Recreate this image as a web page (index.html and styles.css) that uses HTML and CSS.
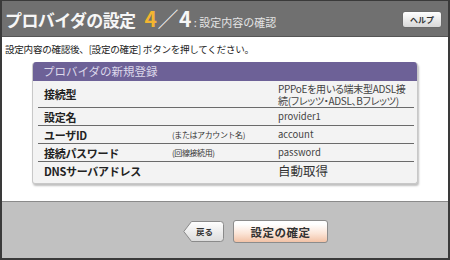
FILE: index.html
```html
<!DOCTYPE html>
<html lang="ja">
<head>
<meta charset="utf-8">
<link rel="stylesheet" href="styles.css">
</head>
<body>
<div class="frame">
  <header class="top">
    <h1 class="title">
      <span class="t-main">プロバイダの設定</span>
      <span class="step"><span class="cur">4</span><span class="sl">／</span>4</span>
      <span class="sub">: 設定内容の確認</span>
    </h1>
    <button class="help">ヘルプ</button>
  </header>
  <main class="content">
    <p class="lead">設定内容の確認後、[設定の確定] ボタンを押してください。</p>
    <section class="card">
      <div class="card-h">プロバイダの新規登録</div>
      <div class="rows">
        <div class="row tall">
          <div class="lbl">接続型</div><div class="note"></div>
          <div class="val wrap">PPPoEを用いる端末型ADSL接続(フレッツ・ADSL、Bフレッツ)</div>
        </div>
        <div class="row">
          <div class="lbl">設定名</div><div class="note"></div>
          <div class="val">provider1</div>
        </div>
        <div class="row">
          <div class="lbl">ユーザID</div><div class="note">(またはアカウント名)</div>
          <div class="val">account</div>
        </div>
        <div class="row">
          <div class="lbl">接続パスワード</div><div class="note">(回線接続用)</div>
          <div class="val">password</div>
        </div>
        <div class="row last">
          <div class="lbl">DNSサーバアドレス</div><div class="note"></div>
          <div class="val big">自動取得</div>
        </div>
      </div>
    </section>
  </main>
  <footer class="foot">
    <button class="back">
      <svg class="back-shape" width="41" height="21" viewBox="0 0 41 21">
        <defs>
          <linearGradient id="bg" x1="0" y1="0" x2="0" y2="1">
            <stop offset="0" stop-color="#ffffff"/>
            <stop offset="1" stop-color="#dcdcdc"/>
          </linearGradient>
        </defs>
        <path d="M8.5,0.5 H37.5 Q40.5,0.5 40.5,3.5 V17.5 Q40.5,20.5 37.5,20.5 H8.5 L0.8,10.5 Z" fill="url(#bg)" stroke="#8a8a8a" stroke-width="1"/>
      </svg>
      <span class="back-t">戻る</span>
    </button>
    <button class="confirm">設定の確定</button>
  </footer>
</div>
</body>
</html>
```
FILE: styles.css
```css
* { box-sizing: border-box; }
html, body { margin: 0; padding: 0; background: #fff; }
body { font-family: "Noto Sans CJK JP", "Noto Sans", sans-serif; color: #222; }
.frame {
  width: 450px; height: 260px;
  border-left: 2px solid #3a3a3a; border-right: 2px solid #3a3a3a;
  border-top: 1px solid #3a3a3a; border-bottom: 2px solid #3a3a3a;
  display: flex; flex-direction: column;
  background: #fff;
}
.top {
  height: 36px; flex: none;
  background: #707070;
  border-bottom: 1px solid #555;
  display: flex; align-items: center; justify-content: space-between;
  padding: 0 6px 0 3px;
}
.title { margin: 0; display: flex; align-items: baseline; font-weight: bold; color: #f6f6f6; line-height: 1; }
.t-main { font-size: 17px; letter-spacing: -0.6px; }
.step { font-size: 21px; margin-left: 9px; font-weight: bold; letter-spacing: -0.5px; }
.cur { color: #f3b530; }
.sl { font-weight: normal; margin: 0 1px; }
.sub { font-size: 11px; font-weight: normal; color: #e4e4e4; margin-left: 3px; }
.help {
  width: 40px; height: 17px; padding: 0;
  border: 1px solid #6a6a6a; border-radius: 3px;
  background: linear-gradient(#ffffff, #d8d8d8);
  font-family: inherit; font-size: 8px; font-weight: bold; color: #333;
  margin-top: 2px;
}
.content { flex: 1; padding: 6px 0 0 0; }
.lead { margin: 0 0 6px 3px; font-size: 9.6px; line-height: 13px; color: #222; letter-spacing: -0.3px; }
.card {
  margin-left: 30px; width: 386px;
  background: #f3f3f3;
  border: 1px solid #c8c8c8; border-top: none;
  border-radius: 4px 4px 3px 3px;
  box-shadow: 1px 2px 2px rgba(0,0,0,0.25);
  padding: 0 3px 3px 5px;
  overflow: hidden;
}
.card-h {
  margin: 0 -3px 0 -5px; height: 19px;
  background: #6d6197;
  color: #dcd8ea; font-size: 11.5px; line-height: 19px;
  padding-left: 10px;
}
.rows { display: flex; flex-direction: column; }
.row {
  display: grid; grid-template-columns: 134px 106px 1fr;
  align-items: center; height: 18px;
  border-bottom: 1px solid #6a6a6a;
}
.row.tall { height: 27px; }
.row.last { border-bottom: none; }
.lbl { padding-left: 6px; font-size: 11px; font-weight: bold; color: #222; letter-spacing: -0.3px; }
.note { font-size: 8px; color: #333; letter-spacing: -0.4px; }
.val { font-size: 9.5px; color: #444; line-height: 11.5px; }
.val.wrap {
  font-size: 10px; letter-spacing: -0.3px; line-height: 12px; padding-top: 1px; min-width: 0;
  font-feature-settings: "palt";
}
.val.big { font-size: 12.5px; color: #333; }
.foot {
  height: 57px; flex: none;
  background: #c1c1c1;
  border-top: 1px solid #8a8a8a;
  display: flex; align-items: center; gap: 9px;
  padding: 3px 0 0 181px;
}
.back {
  position: relative; width: 41px; height: 21px;
  padding: 0; border: none; background: none;
  font-family: inherit;
}
.back-shape { position: absolute; left: 0; top: 0; }
.back-t { position: relative; display: block; padding-left: 13px; font-size: 8.5px; font-weight: bold; color: #333; line-height: 21px; text-align: left; }
.confirm {
  width: 95px; height: 23px; padding: 0;
  border: 1px solid #8c8c8c; border-radius: 3px;
  background: linear-gradient(#ffffff 15%, #fbe4d6 60%, #f2c2a6);
  font-family: inherit; font-size: 11.5px; font-weight: bold; color: #333;
  letter-spacing: 0.5px;
}
```
